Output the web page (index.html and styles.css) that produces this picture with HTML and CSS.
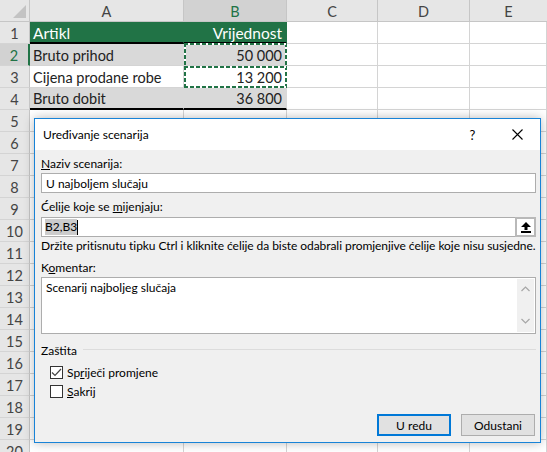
FILE: index.html
```html
<!DOCTYPE html>
<html lang="hr">
<head>
  <meta charset="utf-8"/>
  <title>Uređivanje scenarija</title>
  <link rel="stylesheet" href="styles.css">
</head>
<body>
  <div class="sheet">
    <div class="grid">
      <div class="corner"><svg width="13" height="13" viewBox="0 0 13 13"><polygon points="13,0 13,13 0,13" fill="#c3c3c3"/></svg></div>
      <div class="ch">A</div><div class="ch sel">B</div><div class="ch">C</div><div class="ch">D</div><div class="ch last">E</div>

      <div class="rh">1</div><div class="c head">Artikl</div><div class="c head num">Vrijednost</div><div class="c"></div><div class="c"></div><div class="c"></div>
      <div class="rh sel">2</div><div class="c band">Bruto prihod</div><div class="c band num copy first">50 000</div><div class="c"></div><div class="c"></div><div class="c"></div>
      <div class="rh">3</div><div class="c">Cijena prodane robe</div><div class="c num copy">13 200</div><div class="c"></div><div class="c"></div><div class="c"></div>
      <div class="rh">4</div><div class="c band total">Bruto dobit</div><div class="c band num total">36 800</div><div class="c"></div><div class="c"></div><div class="c"></div>
      <div class="rh">5</div><div class="c"></div><div class="c"></div><div class="c"></div><div class="c"></div><div class="c"></div>
      <div class="rh">6</div><div class="c"></div><div class="c"></div><div class="c"></div><div class="c"></div><div class="c"></div>
      <div class="rh">7</div><div class="c"></div><div class="c"></div><div class="c"></div><div class="c"></div><div class="c"></div>
      <div class="rh">8</div><div class="c"></div><div class="c"></div><div class="c"></div><div class="c"></div><div class="c"></div>
      <div class="rh">9</div><div class="c"></div><div class="c"></div><div class="c"></div><div class="c"></div><div class="c"></div>
      <div class="rh">10</div><div class="c"></div><div class="c"></div><div class="c"></div><div class="c"></div><div class="c"></div>
      <div class="rh">11</div><div class="c"></div><div class="c"></div><div class="c"></div><div class="c"></div><div class="c"></div>
      <div class="rh">12</div><div class="c"></div><div class="c"></div><div class="c"></div><div class="c"></div><div class="c"></div>
      <div class="rh">13</div><div class="c"></div><div class="c"></div><div class="c"></div><div class="c"></div><div class="c"></div>
      <div class="rh">14</div><div class="c"></div><div class="c"></div><div class="c"></div><div class="c"></div><div class="c"></div>
      <div class="rh">15</div><div class="c"></div><div class="c"></div><div class="c"></div><div class="c"></div><div class="c"></div>
      <div class="rh">16</div><div class="c"></div><div class="c"></div><div class="c"></div><div class="c"></div><div class="c"></div>
      <div class="rh">17</div><div class="c"></div><div class="c"></div><div class="c"></div><div class="c"></div><div class="c"></div>
      <div class="rh">18</div><div class="c"></div><div class="c"></div><div class="c"></div><div class="c"></div><div class="c"></div>
      <div class="rh">19</div><div class="c"></div><div class="c"></div><div class="c"></div><div class="c"></div><div class="c"></div>
      <div class="rh">20</div><div class="c"></div><div class="c"></div><div class="c"></div><div class="c"></div><div class="c"></div>
    </div>

    <div class="dialog">
      <div class="titlebar">
        <span class="title">Uređivanje scenarija</span>
        <span class="tb-btn">?</span>
        <span class="tb-btn">
          <svg width="11" height="11" viewBox="0 0 11 11"><path d="M0.5 0.5 L10.5 10.5 M10.5 0.5 L0.5 10.5" stroke="#000" stroke-width="1.1"/></svg>
        </span>
      </div>

      <div class="dlg-body">
        <div class="label first"><u>N</u>aziv scenarija:</div>
        <div class="field">U najboljem slučaju</div>

        <div class="label">Ćelije koje se <u>m</u>ijenjaju:</div>
        <div class="field cells">
          <span class="value"><span class="selected">B2,B3</span><span class="caret"></span></span>
          <span class="collapse">
            <svg width="10" height="11" viewBox="0 0 10 11"><polygon points="5,0 10,5 6.5,5 6.5,8 3.5,8 3.5,5 0,5" fill="#000"/><rect x="0" y="9" width="10" height="2" fill="#000"/></svg>
          </span>
        </div>
        <div class="hint">Držite pritisnutu tipku Ctrl i kliknite ćelije da biste odabrali promjenjive ćelije koje nisu susjedne.</div>

        <div class="label">K<u>o</u>mentar:</div>
        <div class="memo">
          <span class="memo-text">Scenarij najboljeg slučaja</span>
          <span class="vscroll">
            <svg width="9" height="6" viewBox="0 0 9 6"><path d="M0.5 5 L4.5 1 L8.5 5" fill="none" stroke="#a6a6a6" stroke-width="1.2"/></svg>
            <svg width="9" height="6" viewBox="0 0 9 6"><path d="M0.5 1 L4.5 5 L8.5 1" fill="none" stroke="#a6a6a6" stroke-width="1.2"/></svg>
          </span>
        </div>

        <div class="group">
          <span>Zaštita</span>
          <span class="rule"></span>
        </div>
        <label class="check first-check">
          <span class="box">
            <svg width="11" height="11" viewBox="0 0 11 11"><path d="M1 5.5 L4 8.5 L10 2" fill="none" stroke="#444" stroke-width="1.2"/></svg>
          </span>
          <span>Sp<u>r</u>iječi promjene</span>
        </label>
        <label class="check">
          <span class="box"></span>
          <span><u>S</u>akrij</span>
        </label>

        <div class="actions">
          <button class="btn default">U redu</button>
          <button class="btn">Odustani</button>
        </div>
      </div>
    </div>
  </div>
</body>
</html>
```

FILE: styles.css
```css
body {
  margin: 0;
  background: #fff;
  font-family: Lato, "Liberation Sans", sans-serif;
  overflow: hidden;
}
.sheet {
  position: relative;
  width: 547px;
  height: 452px;
  overflow: hidden;
}

/* worksheet */
.grid {
  display: grid;
  grid-template-columns: 30px 154px 103px 91px 92px 77px;
  grid-auto-rows: 22px;
  font-size: 14.5px;
}
.corner {
  background: #e6e6e6;
  border-right: 1px solid #c6c6c6;
  border-bottom: 1px solid #c6c6c6;
  box-sizing: border-box;
  display: flex;
  align-items: flex-end;
  justify-content: flex-end;
  padding: 0 3px 3px 0;
}
.ch {
  background: #e6e6e6;
  color: #444;
  border-right: 1px solid #c6c6c6;
  border-bottom: 1px solid #c6c6c6;
  box-sizing: border-box;
  display: flex;
  align-items: center;
  justify-content: center;
  padding-top: 1px;
}
.ch.last { border-right: none; }
.ch.sel {
  background: #d2d2d2;
  color: #217346;
}
.rh {
  background: #e6e6e6;
  color: #444;
  border-right: 1px solid #c6c6c6;
  border-bottom: 1px solid #d4d4d4;
  box-sizing: border-box;
  display: flex;
  align-items: center;
  justify-content: center;
  padding-top: 1px;
}
.rh.sel {
  background: #d2d2d2;
  color: #217346;
  border-right: 2px solid #217346;
}
.c {
  position: relative;
  border-right: 1px solid #d4d4d4;
  border-bottom: 1px solid #d4d4d4;
  box-sizing: border-box;
  display: flex;
  align-items: center;
  padding: 1px 4px 0 3px;
  color: #222;
  white-space: nowrap;
}
.c.num { justify-content: flex-end; }
.c.head {
  background: #217346;
  color: #fff;
  border-right-color: #217346;
  border-bottom: 2px solid #000;
  font-size: 15.5px;
}
.c.band { background: #d9d9d9; border-right-color: #d9d9d9; }
.c.total { border-bottom: 2px solid #000; }

/* copy marquee over B2:B3 */
.c.copy::after {
  content: "";
  position: absolute;
  left: 0;
  right: -1px;
  top: 0;
  bottom: -1px;
  background:
    repeating-linear-gradient(90deg, #217346 0 4px, #fff 4px 6px) left top / 100% 2px no-repeat,
    repeating-linear-gradient(90deg, #217346 0 4px, #fff 4px 6px) left bottom / 100% 2px no-repeat,
    repeating-linear-gradient(180deg, #217346 0 4px, #fff 4px 6px) left top / 2px 100% no-repeat,
    repeating-linear-gradient(180deg, #217346 0 4px, #fff 4px 6px) right top / 2px 100% no-repeat;
  pointer-events: none;
}
.c.copy.first::after {
  top: -1px;
  bottom: 0;
  background:
    repeating-linear-gradient(90deg, #217346 0 4px, #fff 4px 6px) left top / 100% 2px no-repeat,
    repeating-linear-gradient(180deg, #217346 0 4px, #fff 4px 6px) left top / 2px 100% no-repeat,
    repeating-linear-gradient(180deg, #217346 0 4px, #fff 4px 6px) right top / 2px 100% no-repeat;
}

/* scenario dialog */
.dialog {
  position: absolute;
  left: 34px;
  top: 118px;
  width: 507px;
  box-sizing: border-box;
  border: 1px solid #1883d7;
  background: #f0f0f0;
  box-shadow: 0 0 10px rgba(0, 0, 0, .28);
  font-size: 12px;
  color: #000;
}
.titlebar {
  height: 31px;
  background: #fff;
  display: flex;
  align-items: center;
  padding-left: 8px;
}
.title { flex: 1; }
.tb-btn {
  width: 45px;
  height: 31px;
  display: flex;
  align-items: center;
  justify-content: center;
  font-size: 13px;
}
.dlg-body {
  padding: 0 4px 6px 6px;
}
.label {
  line-height: 16px;
  margin-top: 6px;
}
.field {
  height: 20px;
  box-sizing: border-box;
  border: 1px solid #adadad;
  background: #fff;
  display: flex;
  align-items: center;
  padding-left: 4px;
  margin-top: 1px;
}
.field.cells {
  margin-top: 2px;
  padding-left: 3px;
}
.value {
  flex: 1;
  display: flex;
  align-items: center;
}
.selected {
  background: #cccccc;
  line-height: 16px;
}
.caret {
  width: 1px;
  height: 15px;
  background: #000;
}
.collapse {
  width: 21px;
  height: 20px;
  margin: -1px -1px -1px 0;
  box-sizing: border-box;
  border: 2px solid #b9b9b9;
  background: #fff;
  display: flex;
  align-items: center;
  justify-content: center;
}
.hint {
  line-height: 16px;
  margin-top: 1px;
  white-space: nowrap;
  letter-spacing: -0.06px;
}
.memo {
  height: 57px;
  box-sizing: border-box;
  border: 1px solid #adadad;
  background: #fff;
  display: flex;
  margin-top: 1px;
}
.memo-text {
  flex: 1;
  padding: 2px 4px;
  line-height: 16px;
}
.vscroll {
  width: 17px;
  margin: 1px;
  background: #f0f0f0;
  display: flex;
  flex-direction: column;
  justify-content: space-between;
  align-items: center;
  padding: 7px 0 8px;
}
.group {
  display: flex;
  align-items: center;
  line-height: 16px;
  margin-top: 9px;
}
.rule {
  flex: 1;
  border-top: 1px solid #dcdcdc;
  margin: -3px 0 0 6px;
}
.check {
  display: flex;
  align-items: center;
  gap: 4px;
  height: 16px;
  padding-left: 9px;
  margin-top: 3px;
}
.check.first-check { margin-top: 5px; }
.box {
  width: 13px;
  height: 13px;
  box-sizing: border-box;
  border: 1px solid #333;
  background: #fff;
  display: flex;
  align-items: center;
  justify-content: center;
}
.actions {
  display: flex;
  justify-content: flex-end;
  gap: 10px;
  margin-top: 15px;
  padding-right: 1px;
}
.btn {
  width: 74px;
  height: 22px;
  box-sizing: border-box;
  border: 1px solid #adadad;
  background: #e1e1e1;
  font: 12px Lato, sans-serif;
  color: #000;
  padding: 0;
}
.btn.default { border: 2px solid #0078d7; }
```
